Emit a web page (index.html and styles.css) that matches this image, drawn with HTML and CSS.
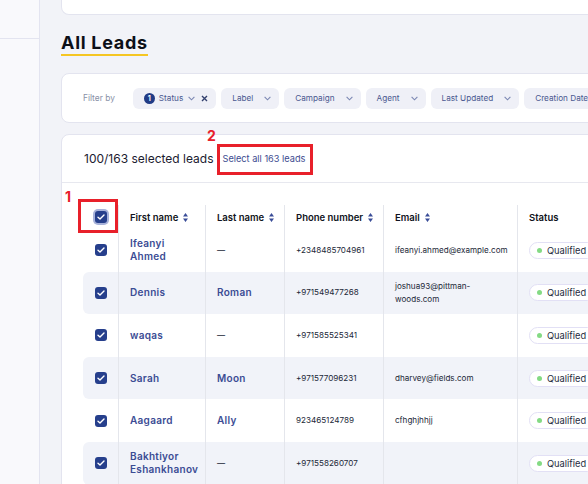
FILE: index.html
```html
<!DOCTYPE html>
<html>
<head>
<meta charset="utf-8">
<link rel="stylesheet" href="styles.css">
</head>
<body>
<div class="app">
  <aside class="sidebar"><div class="sidebar-top"></div></aside>
  <main class="main">
    <div class="top-card"></div>
    <h1 class="title">All Leads</h1>

    <section class="card filter-card">
      <span class="filter-label">Filter by</span>
      <div class="chips">
        <div class="chip">
          <span class="badge">1</span><span>Status</span>
          <svg class="chev" width="7" height="5" viewBox="0 0 7 5"><polyline points="0.6,0.8 3.5,3.8 6.4,0.8"/></svg>
          <svg class="close" width="7" height="7" viewBox="0 0 7 7"><path d="M1 1L6 6M6 1L1 6"/></svg>
        </div>
        <div class="chip"><span>Label</span><svg class="chev" width="7" height="5" viewBox="0 0 7 5"><polyline points="0.6,0.8 3.5,3.8 6.4,0.8"/></svg></div>
        <div class="chip"><span>Campaign</span><svg class="chev" width="7" height="5" viewBox="0 0 7 5"><polyline points="0.6,0.8 3.5,3.8 6.4,0.8"/></svg></div>
        <div class="chip"><span>Agent</span><svg class="chev" width="7" height="5" viewBox="0 0 7 5"><polyline points="0.6,0.8 3.5,3.8 6.4,0.8"/></svg></div>
        <div class="chip"><span>Last Updated</span><svg class="chev" width="7" height="5" viewBox="0 0 7 5"><polyline points="0.6,0.8 3.5,3.8 6.4,0.8"/></svg></div>
        <div class="chip"><span>Creation Date</span><svg class="chev" width="7" height="5" viewBox="0 0 7 5"><polyline points="0.6,0.8 3.5,3.8 6.4,0.8"/></svg></div>
      </div>
    </section>

    <section class="card leads-card">
      <div class="sel-head">
        <span class="sel-count">100/163 selected leads</span>
        <a class="sel-all">Select all 163 leads</a>
      </div>
      <span class="anno-num anno-2">2</span>
      <span class="anno-box anno-box-2"></span>
      <span class="anno-num anno-1">1</span>
      <span class="anno-box anno-box-1"></span>

      <div class="table">
        <div class="row head">
          <div class="cell cb-cell"><span class="cb cb-head"><svg width="8" height="6" viewBox="0 0 8 6"><path d="M1 3.2L3 5L7 1"/></svg></span></div>
          <div class="cell">First name<svg class="sort" width="5" height="9" viewBox="0 0 5 9"><path d="M2.5 0L5 3.6H0Z M2.5 9L5 5.4H0Z"/></svg></div>
          <div class="cell">Last name<svg class="sort" width="5" height="9" viewBox="0 0 5 9"><path d="M2.5 0L5 3.6H0Z M2.5 9L5 5.4H0Z"/></svg></div>
          <div class="cell">Phone number<svg class="sort" width="5" height="9" viewBox="0 0 5 9"><path d="M2.5 0L5 3.6H0Z M2.5 9L5 5.4H0Z"/></svg></div>
          <div class="cell">Email<svg class="sort" width="5" height="9" viewBox="0 0 5 9"><path d="M2.5 0L5 3.6H0Z M2.5 9L5 5.4H0Z"/></svg></div>
          <div class="cell">Status</div>
        </div>

        <div class="row">
          <div class="cell cb-cell"><span class="cb"><svg width="8" height="6" viewBox="0 0 8 6"><path d="M1 3.2L3 5L7 1"/></svg></span></div>
          <div class="cell name">Ifeanyi<br>Ahmed</div>
          <div class="cell text">—</div>
          <div class="cell text">+2348485704961</div>
          <div class="cell text">ifeanyi.ahmed@example.com</div>
          <div class="cell"><span class="pill"><i class="dot"></i>Qualified</span></div>
        </div>

        <div class="row alt">
          <div class="cell cb-cell"><span class="cb"><svg width="8" height="6" viewBox="0 0 8 6"><path d="M1 3.2L3 5L7 1"/></svg></span></div>
          <div class="cell name">Dennis</div>
          <div class="cell name">Roman</div>
          <div class="cell text">+971549477268</div>
          <div class="cell text">joshua93@pittman-<br>woods.com</div>
          <div class="cell"><span class="pill"><i class="dot"></i>Qualified</span></div>
        </div>

        <div class="row">
          <div class="cell cb-cell"><span class="cb"><svg width="8" height="6" viewBox="0 0 8 6"><path d="M1 3.2L3 5L7 1"/></svg></span></div>
          <div class="cell name">waqas</div>
          <div class="cell text">—</div>
          <div class="cell text">+971585525341</div>
          <div class="cell text"></div>
          <div class="cell"><span class="pill"><i class="dot"></i>Qualified</span></div>
        </div>

        <div class="row alt">
          <div class="cell cb-cell"><span class="cb"><svg width="8" height="6" viewBox="0 0 8 6"><path d="M1 3.2L3 5L7 1"/></svg></span></div>
          <div class="cell name">Sarah</div>
          <div class="cell name">Moon</div>
          <div class="cell text">+971577096231</div>
          <div class="cell text">dharvey@fields.com</div>
          <div class="cell"><span class="pill"><i class="dot"></i>Qualified</span></div>
        </div>

        <div class="row">
          <div class="cell cb-cell"><span class="cb"><svg width="8" height="6" viewBox="0 0 8 6"><path d="M1 3.2L3 5L7 1"/></svg></span></div>
          <div class="cell name">Aagaard</div>
          <div class="cell name">Ally</div>
          <div class="cell text">923465124789</div>
          <div class="cell text">cfhghjhhjj</div>
          <div class="cell"><span class="pill"><i class="dot"></i>Qualified</span></div>
        </div>

        <div class="row alt">
          <div class="cell cb-cell"><span class="cb"><svg width="8" height="6" viewBox="0 0 8 6"><path d="M1 3.2L3 5L7 1"/></svg></span></div>
          <div class="cell name">Bakhtiyor<br>Eshankhanov</div>
          <div class="cell text">—</div>
          <div class="cell text">+971558260707</div>
          <div class="cell text"></div>
          <div class="cell"><span class="pill"><i class="dot"></i>Qualified</span></div>
        </div>
      </div>
    </section>
  </main>
</div>
</body>
</html>
```

FILE: styles.css
```css
* { box-sizing: border-box; }
html, body { margin: 0; padding: 0; }
body {
  width: 588px;
  height: 484px;
  overflow: hidden;
  background: #f2f3f8;
  font-family: Inter, "Noto Sans", sans-serif;
  color: #1e2433;
}
.app { display: flex; height: 484px; }
.sidebar {
  width: 40px;
  flex: none;
  background: #f9f9fc;
  border-right: 1px solid #e3e4f0;
}
.sidebar-top { height: 39px; border-bottom: 1px solid #e3e4f0; }
.main {
  flex: none;
  width: 640px;
  padding-left: 21px;
}
.top-card {
  height: 15px;
  background: #fff;
  border: 1px solid #e3e4ef;
  border-top: none;
  border-radius: 0 0 8px 8px;
}
.title {
  display: inline-block;
  margin: 17px 0 0 0;
  font-size: 18px;
  line-height: 22px;
  font-weight: 700;
  letter-spacing: 0.7px;
  color: #0c0f18;
  border-bottom: 2.5px solid #f5c623;
}
.card {
  background: #fff;
  border: 1px solid #e3e4ef;
  border-radius: 8px;
}
.filter-card {
  margin-top: 17px;
  height: 50px;
  display: flex;
  align-items: center;
  padding-left: 21px;
}
.filter-label {
  font-size: 8.4px;
  color: #8890a6;
  margin-right: 18px;
}
.chips { display: flex; gap: 5px; }
.chip {
  height: 21px;
  display: flex;
  align-items: center;
  background: #eff0f7;
  border-radius: 6px;
  padding: 0 8px 0 11px;
  font-size: 8.2px;
  color: #4a5890;
  white-space: nowrap;
}
.chip .chev { margin-left: 11px; fill: none; stroke: #7b87b3; stroke-width: 1.1; }
.chip .badge + span + .chev { margin-left: 5px; }
.badge {
  width: 11px;
  height: 11px;
  border-radius: 50%;
  background: #213b86;
  color: #fff;
  font-size: 7.5px;
  font-weight: 600;
  display: inline-flex;
  align-items: center;
  justify-content: center;
  margin-right: 4px;
}
.close { margin-left: 6px; fill: none; stroke: #33416e; stroke-width: 1.4; }

.leads-card {
  margin-top: 11px;
  position: relative;
  height: 400px;
  border-radius: 8px 8px 0 0;
}
.sel-head {
  height: 48px;
  display: flex;
  align-items: center;
  padding-left: 22px;
  border-bottom: 1px solid #e7e8ef;
}
.sel-count { font-size: 12px; color: #1b2030; }
.sel-all { margin-left: 9px; font-size: 9.2px; color: #3c4b90; }

.anno-num {
  position: absolute;
  font-size: 14px;
  line-height: 14px;
  font-weight: 700;
  color: #e8202a;
}
.anno-2 { left: 145px; top: -6px; }
.anno-1 { left: 3px; top: 55px; }
.anno-box { position: absolute; border: 3px solid #e8202a; }
.anno-box-2 { left: 155px; top: 9px; width: 96px; height: 31px; }
.anno-box-1 { left: 16px; top: 64px; width: 40px; height: 34px; }

.table { padding: 22px 0 0 21px; }
.row {
  display: grid;
  grid-template-columns: 35px 87px 79px 99px 134px 150px;
  height: 42.6px;
  border-radius: 6px 0 0 6px;
}
.row.head { height: 24px; }
.row.alt { background: #f1f3f9; }
.cell {
  display: flex;
  align-items: center;
  padding: 0 8px 0 11px;
  border-left: 1px solid #e4e6ec;
}
.cb-cell { border-left: none; padding: 0; justify-content: center; }
.head .cell {
  font-size: 9.5px;
  font-weight: 600;
  color: #0f1320;
  white-space: nowrap;
}
.sort { margin-left: 5px; fill: #3a4d98; }
.name {
  font-size: 10px;
  font-weight: 600;
  letter-spacing: 0.3px;
  line-height: 13px;
  color: #3b4c94;
}
.text {
  font-size: 8.1px;
  line-height: 13px;
  color: #222838;
}
.cb {
  width: 12px;
  height: 12px;
  border-radius: 3px;
  background: #263f8c;
  display: inline-flex;
  align-items: center;
  justify-content: center;
}
.cb svg { fill: none; stroke: #fff; stroke-width: 1.4; stroke-linecap: round; stroke-linejoin: round; }
.cb-head { box-shadow: 0 0 0 2px #a7b2da; margin-left: 1px; }
.pill {
  display: inline-flex;
  align-items: center;
  height: 17px;
  padding: 0 9px 0 7px;
  border: 1px solid #e2e0f5;
  border-radius: 9px;
  background: #fff;
  font-size: 9.3px;
  color: #262c3c;
  white-space: nowrap;
}
.dot {
  width: 5px;
  height: 5px;
  border-radius: 50%;
  background: #84da84;
  margin-right: 5px;
}
```
